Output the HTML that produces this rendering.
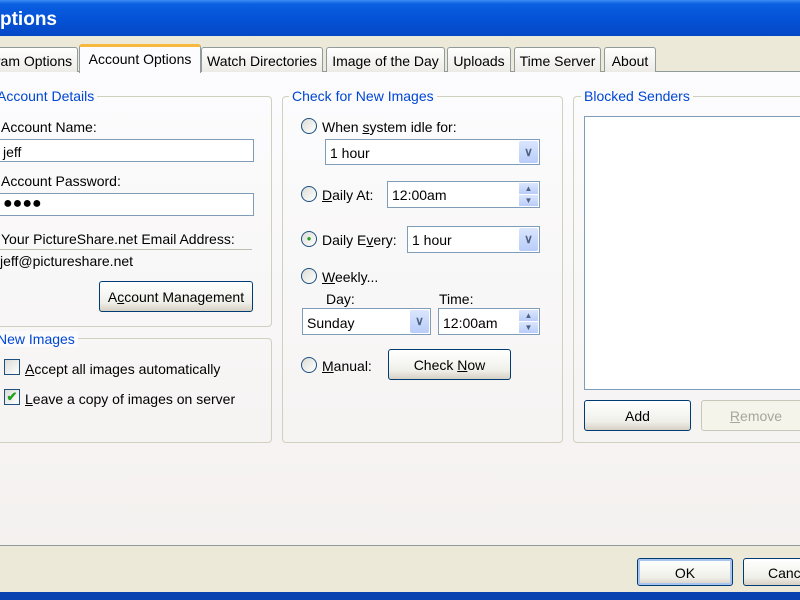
<!DOCTYPE html>
<html><head><style>
*{box-sizing:border-box;margin:0;padding:0}
body{width:800px;height:600px;overflow:hidden;position:relative;background:#ece9d8;font-family:"Liberation Sans",sans-serif;font-size:14px;color:#000}
.a{position:absolute;white-space:nowrap}
.title{left:0;top:0;width:800px;height:36px;background:linear-gradient(#3d8cf5 0,#0a5fe0 4px,#0553d8 50%,#0548c6 100%);color:#fff;font-weight:bold;font-size:19px;padding:9px 0 0 0}
.tab{top:47px;height:25px;border:1px solid #919b9c;border-bottom:none;border-radius:3px 3px 0 0;background:linear-gradient(#fff,#ecebe6);padding:5px 0 0 0;text-align:center}
.page{left:0;top:71px;width:800px;height:475px;border-top:1px solid #919b9c;border-bottom:1px solid #919b9c;background:linear-gradient(#fcfcfe,#f4f1ef)}
.grp{border:1px solid #d0d0bf;border-radius:4px}
.leg{color:#0046d5;background:#fbfbfb;padding:0 3px}
.inp{background:#fff;border:1px solid #7f9db9;height:23px;padding:4px 4px}
.dd{position:absolute;right:1px;top:1px;width:19px;height:19px;background:linear-gradient(#dbe6fd,#b9cdf9);border-radius:2px;color:#4d6185;font-size:12px;font-weight:bold;text-align:center;line-height:19px}
.sp{position:absolute;right:1px;width:19px;height:11px;background:linear-gradient(#dbe6fd,#b9cdf9);font-size:8px;text-align:center;color:#4d6185;line-height:11px}
.btn{border:1px solid #003c74;border-radius:3px;background:linear-gradient(#fff,#f0f0ea 70%,#d6d0c5);text-align:center;padding-top:7px}
.rad{width:16px;height:16px;border:1px solid #1c5180;border-radius:50%;background:linear-gradient(135deg,#dcdcd6,#fff)}
.chk{width:16px;height:16px;border:1px solid #1c5180;background:linear-gradient(135deg,#dcdcd6,#fff)}
u{text-decoration:underline}
</style></head><body>
<div class="a title">ptions</div>
<div class="a page"></div>
<div class="a tab" style="left:-10px;width:88px">ram Options</div>
<div class="a tab" style="left:79px;top:44px;height:29px;width:122px;background:#fcfcfe;border-top:3px solid #f7b93d;padding-top:4px">Account Options</div>
<div class="a tab" style="left:201px;width:122px">Watch Directories</div>
<div class="a tab" style="left:326px;width:119px">Image of the Day</div>
<div class="a tab" style="left:447px;width:64px">Uploads</div>
<div class="a tab" style="left:514px;width:87px">Time Server</div>
<div class="a tab" style="left:604px;width:52px">About</div>

<div class="a grp" style="left:-5px;top:96px;width:277px;height:231px"></div>
<div class="a leg" style="left:-6px;top:88px">Account Details</div>
<div class="a" style="left:1px;top:119px">Account Name:</div>
<div class="a inp" style="left:-2px;top:139px;width:256px">jeff</div>
<div class="a" style="left:1px;top:173px">Account Password:</div>
<div class="a inp" style="left:-2px;top:193px;width:256px;font-size:16px;padding-top:1px">●●●●</div>
<div class="a" style="left:1px;top:231px">Your PictureShare.net Email Address:</div>
<div class="a" style="left:0;top:249px;width:252px;border-top:1px solid #c0c0b0"></div>
<div class="a" style="left:0px;top:253px">jeff@pictureshare.net</div>
<div class="a btn" style="left:99px;top:281px;width:154px;height:31px">A<u>c</u>count Management</div>

<div class="a grp" style="left:-5px;top:338px;width:277px;height:105px"></div>
<div class="a leg" style="left:-6px;top:331px">New Images</div>
<div class="a chk" style="left:4px;top:359px"></div>
<div class="a" style="left:25px;top:361px"><u>A</u>ccept all images automatically</div>
<div class="a chk" style="left:4px;top:389px;color:#21a121;font-size:13px;line-height:14px;text-align:center;font-weight:bold">✔</div>
<div class="a" style="left:25px;top:391px"><u>L</u>eave a copy of images on server</div>

<div class="a grp" style="left:282px;top:96px;width:281px;height:347px"></div>
<div class="a leg" style="left:289px;top:88px">Check for New Images</div>
<div class="a rad" style="left:301px;top:118px"></div>
<div class="a" style="left:322px;top:119px">When <u>s</u>ystem idle for:</div>
<div class="a inp" style="left:325px;top:139px;width:215px;height:26px;padding-top:5px">1 hour<div class="dd" style="height:22px;line-height:22px">&#8744;</div></div>
<div class="a rad" style="left:301px;top:186px"></div>
<div class="a" style="left:322px;top:187px"><u>D</u>aily At:</div>
<div class="a inp" style="left:387px;top:181px;width:153px;height:27px;padding-top:5px">12:00am<div class="sp" style="top:1px">▲</div><div class="sp" style="top:13px">▼</div></div>
<div class="a rad" style="left:301px;top:231px;font-size:8px;color:#21a121;text-align:center;line-height:14px">●</div>
<div class="a" style="left:322px;top:232px">Daily E<u>v</u>ery:</div>
<div class="a inp" style="left:407px;top:226px;width:133px;height:27px;padding-top:5px">1 hour<div class="dd" style="height:23px;line-height:23px">&#8744;</div></div>
<div class="a rad" style="left:301px;top:268px"></div>
<div class="a" style="left:322px;top:269px"><u>W</u>eekly...</div>
<div class="a" style="left:326px;top:291px">Day:</div>
<div class="a" style="left:439px;top:291px">Time:</div>
<div class="a inp" style="left:302px;top:308px;width:129px;height:27px;padding-top:6px">Sunday<div class="dd" style="height:23px;line-height:23px">&#8744;</div></div>
<div class="a inp" style="left:438px;top:308px;width:102px;height:27px;padding-top:6px">12:00am<div class="sp" style="top:1px">▲</div><div class="sp" style="top:13px">▼</div></div>
<div class="a rad" style="left:301px;top:357px"></div>
<div class="a" style="left:322px;top:358px"><u>M</u>anual:</div>
<div class="a btn" style="left:388px;top:349px;width:123px;height:31px">Check <u>N</u>ow</div>

<div class="a grp" style="left:573px;top:96px;width:240px;height:347px"></div>
<div class="a leg" style="left:581px;top:88px">Blocked Senders</div>
<div class="a" style="left:584px;top:116px;width:230px;height:274px;background:#fff;border:1px solid #7f9db9"></div>
<div class="a btn" style="left:584px;top:400px;width:107px;height:31px">Add</div>
<div class="a btn" style="left:701px;top:400px;width:110px;height:31px;border-color:#c9c7ba;color:#a7a69c;background:#f5f4ea"><u>R</u>emove</div>

<div class="a btn" style="left:637px;top:558px;width:96px;height:28px;padding-top:6px;border-color:#003c74;box-shadow:inset 0 0 0 2px #a8c4f0">OK</div>
<div class="a btn" style="left:743px;top:558px;width:96px;height:28px;padding-top:6px;text-align:left;padding-left:24px">Cancel</div>
<div class="a" style="left:0;top:592px;width:800px;height:8px;background:#0842b0"></div>
</body></html>
